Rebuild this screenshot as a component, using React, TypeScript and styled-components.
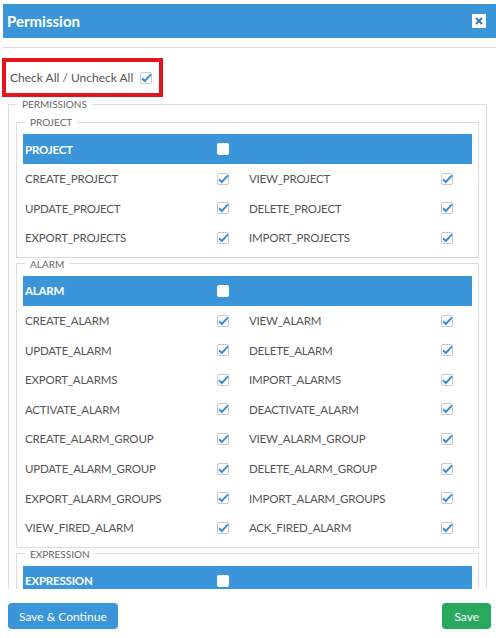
import React from 'react';
import styled, { createGlobalStyle } from 'styled-components';

const GlobalStyle = createGlobalStyle`
  body {
    margin: 0;
    background: #fff;
    font-family: 'Lato', 'Noto Sans', sans-serif;
  }
`;

const Modal = styled.div`
  width: 496px;
  height: 638px;
  padding: 4px 0 0 3px;
  box-sizing: border-box;
  display: flex;
  flex-direction: column;
  overflow: hidden;
`;

const Header = styled.div`
  height: 34px;
  background: #3a96d8;
  display: flex;
  align-items: center;
  justify-content: space-between;
  padding: 0 10px 0 4px;
`;

const Title = styled.h4`
  margin: 0;
  color: #fff;
  font-size: 15px;
  font-weight: 700;
`;

const CloseButton = styled.button`
  width: 14px;
  height: 14px;
  background: #fff;
  border: 0;
  padding: 0;
  display: flex;
  align-items: center;
  justify-content: center;
`;

const Divider = styled.div`
  margin-top: 9px;
  border-top: 1px solid #ddd;
`;

const CheckAll = styled.label`
  margin: 10px 0 0 -1px;
  width: fit-content;
  height: 31px;
  border: 4px solid #e3161e;
  display: flex;
  align-items: center;
  gap: 7px;
  padding: 0 7px 0 4px;
  font-size: 12px;
  color: #555;
`;

const ScrollArea = styled.div`
  height: 491px;
  margin-top: 1px;
  padding: 0 9px 0 5px;
  overflow: hidden;
`;

const Group = styled.fieldset<{ $outer?: boolean }>`
  margin: 0;
  min-width: 0;
  border: 1px solid #ddd;
  padding: 6px ${(p) => (p.$outer ? 7 : 6)}px 4px;
`;

const GroupLegend = styled.legend<{ $outer?: boolean }>`
  font-size: 10px;
  line-height: 12px;
  color: #666;
  padding: 0 5px;
  margin-left: ${(p) => (p.$outer ? 1 : 2)}px;
  text-transform: uppercase;
`;

const Row = styled.div<{ $head?: boolean }>`
  display: grid;
  grid-template-columns: 192px 12px 20px 192px 12px;
  align-items: center;
  height: ${(p) => (p.$head ? '30px' : '29.6px')};
  padding-left: 2px;
  background: ${(p) => (p.$head ? '#3a96d8' : 'transparent')};
  color: ${(p) => (p.$head ? '#fff' : '#555')};
  font-size: 11.5px;
  letter-spacing: -0.2px;
  font-weight: ${(p) => (p.$head ? 700 : 400)};
`;

const Box = styled.span<{ $plain?: boolean }>`
  width: 12px;
  height: 12px;
  box-sizing: border-box;
  border-radius: 2px;
  background: #fff;
  border: ${(p) => (p.$plain ? '0' : '1px solid #c4c9ce')};
  display: inline-flex;
  overflow: visible;
`;

const Footer = styled.div`
  display: flex;
  justify-content: space-between;
  padding: 14px 5px 0;
`;

const Button = styled.button<{ $green?: boolean }>`
  height: 26px;
  border: 0;
  border-radius: 4px;
  padding: 0 ${(p) => (p.$green ? 12 : 11)}px;
  background: ${(p) => (p.$green ? '#27a95e' : '#3a96d8')};
  color: #fff;
  font-family: inherit;
  font-size: 12px;
`;

const CheckBox: React.FC<{ checked?: boolean; plain?: boolean }> = ({ checked, plain }) => (
  <Box $plain={plain}>
    {checked && (
      <svg width="12" height="12" viewBox="0 0 12 12" style={{ margin: -1, overflow: 'visible' }}>
        <path d="M2 6.2 L4.8 9 L11 2.4" fill="none" stroke="#3f8fcf" strokeWidth="2" />
      </svg>
    )}
  </Box>
);

type Section = { name: string; perms: string[] };

// only what is visible above the scroll edge
const sections: Section[] = [
  {
    name: 'PROJECT',
    perms: ['CREATE_PROJECT', 'VIEW_PROJECT', 'UPDATE_PROJECT', 'DELETE_PROJECT', 'EXPORT_PROJECTS', 'IMPORT_PROJECTS'],
  },
  {
    name: 'ALARM',
    perms: [
      'CREATE_ALARM', 'VIEW_ALARM',
      'UPDATE_ALARM', 'DELETE_ALARM',
      'EXPORT_ALARMS', 'IMPORT_ALARMS',
      'ACTIVATE_ALARM', 'DEACTIVATE_ALARM',
      'CREATE_ALARM_GROUP', 'VIEW_ALARM_GROUP',
      'UPDATE_ALARM_GROUP', 'DELETE_ALARM_GROUP',
      'EXPORT_ALARM_GROUPS', 'IMPORT_ALARM_GROUPS',
      'VIEW_FIRED_ALARM', 'ACK_FIRED_ALARM',
    ],
  },
  { name: 'EXPRESSION', perms: [] },
];

const PermissionGroup: React.FC<{ section: Section }> = ({ section }) => {
  const pairs: string[][] = [];
  for (let i = 0; i < section.perms.length; i += 2) {
    pairs.push(section.perms.slice(i, i + 2));
  }
  return (
    <Group>
      <GroupLegend>{section.name}</GroupLegend>
      <Row $head>
        <span>{section.name}</span>
        <CheckBox plain />
      </Row>
      {pairs.map(([a, b]) => (
        <Row key={a}>
          <span>{a}</span>
          <CheckBox checked />
          <span />
          <span>{b}</span>
          <CheckBox checked />
        </Row>
      ))}
    </Group>
  );
};

export default function App() {
  return (
    <>
      <GlobalStyle />
      <Modal>
        <Header>
          <Title>Permission</Title>
          <CloseButton>
            <svg width="8" height="8" viewBox="0 0 8 8">
              <path d="M1 1 L7 7 M7 1 L1 7" stroke="#3d7fb6" strokeWidth="2.2" />
            </svg>
          </CloseButton>
        </Header>
        <Divider />
        <CheckAll>
          Check All / Uncheck All
          <CheckBox checked />
        </CheckAll>
        <ScrollArea>
          <Group $outer>
            <GroupLegend $outer>Permissions</GroupLegend>
            {sections.map((s) => (
              <PermissionGroup key={s.name} section={s} />
            ))}
          </Group>
        </ScrollArea>
        <Footer>
          <Button>Save &amp; Continue</Button>
          <Button $green>Save</Button>
        </Footer>
      </Modal>
    </>
  );
}
